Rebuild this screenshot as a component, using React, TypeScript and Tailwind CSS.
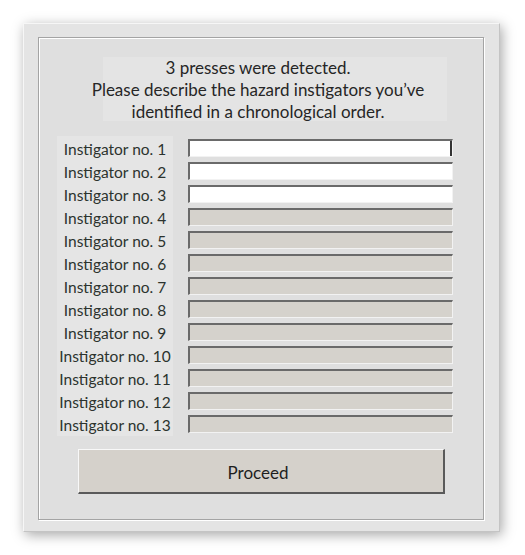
import React from "react";

const labels = Array.from({ length: 13 }, (_, i) => `Instigator no. ${i + 1}`);

export default function App() {
  return (
    <div
      className="w-[525px] h-[555px] bg-white pt-[23px] pl-[23px]"
      style={{ fontFamily: "Lato, 'Open Sans', sans-serif" }}
    >
      <div className="w-[477px] h-[509px] bg-[#e4e4e4] border border-t-[#f6f6f6] border-l-[#f6f6f6] border-r-[#c4c4c4] border-b-[#c4c4c4] shadow-[2px_3px_12px_rgba(0,0,0,0.35)] pt-[13px] pl-[14px]">
        <div className="w-[446px] h-[483px] bg-[#dfdfdf] border border-[#a4a4a4] shadow-[1px_1px_0_#ffffff,inset_1px_1px_0_#ffffff] flex flex-col">
          <div className="ml-[64px] mt-[19px] w-[344px] h-[64px] bg-[#e4e4e4] flex">
            <div className="-ml-[17px] w-[344px] shrink-0 flex flex-col items-center text-[17px] leading-[22px] text-[#262626] whitespace-nowrap">
              <span>3 presses were detected.</span>
              <span>Please describe the hazard instigators you’ve</span>
              <span>identified in a chronological order.</span>
            </div>
          </div>
          <div className="flex mt-[15px]">
            <div className="ml-[18px] w-[116px] bg-[#e5e5e5] flex flex-col gap-[5px] py-[3px]">
              {labels.map((l) => (
                <div
                  key={l}
                  className="h-[18px] pt-[3px] flex items-center justify-center text-[15.5px] text-[#2c332e] whitespace-nowrap"
                >
                  {l}
                </div>
              ))}
            </div>
            <div className="ml-[15px] w-[265px] flex flex-col gap-[5px] pt-[3px]">
              {labels.map((l, i) => (
                <div
                  key={l}
                  className={`relative h-[18px] border-t-2 border-l-2 border-r border-b border-t-[#6a6a6a] border-l-[#6a6a6a] border-r-[#f2f2f2] border-b-[#f2f2f2] ${
                    i < 3 ? "bg-white" : "bg-[#d5d2cc]"
                  }`}
                >
                  {i === 0 && (
                    <div className="absolute right-[0px] top-[0px] w-[2px] h-[15px] bg-[#333]" />
                  )}
                </div>
              ))}
            </div>
          </div>
          <div className="ml-[39px] mt-[13px] w-[367px] h-[45px] bg-[#d5d1cb] border-t border-l border-t-[#f8f8f8] border-l-[#f8f8f8] border-r-2 border-b-2 border-r-[#5a5a5a] border-b-[#5a5a5a] flex items-center justify-center pt-[4px] pr-[6px] text-[17px] text-[#1e1e1e]">
            Proceed
          </div>
        </div>
      </div>
    </div>
  );
}
